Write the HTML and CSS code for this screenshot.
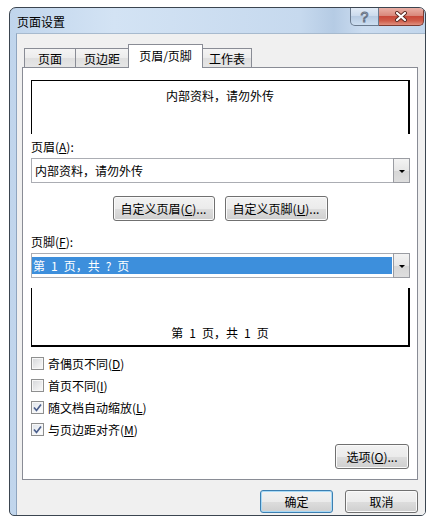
FILE: index.html
```html
<!DOCTYPE html>
<html lang="zh-CN">
  <head>
    <meta charset="UTF-8" />
    <meta name="viewport" content="width=device-width, initial-scale=1.0" />
    <title>页面设置</title>
    <link rel="stylesheet" href="styles.css">
  </head>
  <body>
    <div class="window">
      <div class="titlebar">
        <span class="title">页面设置</span>
        <div class="caption-btns">
          <span class="cap-btn help">?</span>
          <span class="cap-btn close">
            <svg width="14" height="11" viewBox="0 0 14 11">
              <path d="M3 2 L11 9 M11 2 L3 9" stroke="#5a2a24" stroke-width="4" stroke-linecap="round" />
              <path d="M3 2 L11 9 M11 2 L3 9" stroke="#fff" stroke-width="2.2" stroke-linecap="round" />
            </svg>
          </span>
        </div>
      </div>

      <div class="client">
        <div class="tabs">
          <span class="tab">页面</span>
          <span class="tab">页边距</span>
          <span class="tab active">页眉/页脚</span>
          <span class="tab">工作表</span>
        </div>

        <div class="panel">
          <div class="preview preview-head">内部资料，请勿外传</div>

          <div class="field-label">页眉(<u>A</u>):</div>
          <div class="combo">
            <span class="combo-text">内部资料，请勿外传</span>
            <span class="combo-arrow"></span>
          </div>

          <div class="custom-btns">
            <button class="btn btn-custom">自定义页眉(<u>C</u>)...</button>
            <button class="btn btn-custom">自定义页脚(<u>U</u>)...</button>
          </div>

          <div class="field-label field-label-foot">页脚(<u>F</u>):</div>
          <div class="combo">
            <span class="combo-text selected">第&ensp;1&ensp;页，共&ensp;?&ensp;页</span>
            <span class="combo-arrow"></span>
          </div>

          <div class="preview preview-foot">第&ensp;1&ensp;页，共&ensp;1&ensp;页</div>

          <div class="checks">
            <label class="check"><span class="box"></span><span>奇偶页不同(<u>D</u>)</span></label>
            <label class="check"><span class="box"></span><span>首页不同(<u>I</u>)</span></label>
            <label class="check">
              <span class="box checked">
                <svg width="11" height="11" viewBox="0 0 11 11"><path d="M2 5.5 L4.5 8.5 L9 2.5" fill="none" stroke="#4b5f8c" stroke-width="1.7" /></svg>
              </span>
              <span>随文档自动缩放(<u>L</u>)</span>
            </label>
            <label class="check">
              <span class="box checked">
                <svg width="11" height="11" viewBox="0 0 11 11"><path d="M2 5.5 L4.5 8.5 L9 2.5" fill="none" stroke="#4b5f8c" stroke-width="1.7" /></svg>
              </span>
              <span>与页边距对齐(<u>M</u>)</span>
            </label>
          </div>

          <div class="options-row">
            <button class="btn btn-options">选项(<u>O</u>)...</button>
          </div>
        </div>

        <div class="dialog-btns">
          <button class="btn btn-dialog default">确定</button>
          <button class="btn btn-dialog">取消</button>
        </div>
      </div>
    </div>
  </body>
</html>
```

FILE: styles.css
```css
*,
*::before,
*::after {
  box-sizing: border-box;
  padding: 0;
  margin: 0;
}
body {
  background: #fff;
  font-family: "Noto Sans CJK SC", "Liberation Sans", sans-serif;
  font-size: 12px;
  color: #000;
}
.window {
  margin: 7px 0 0 9px;
  width: 417px;
  height: 509px;
  border: 1px solid #3b4550;
  border-radius: 7px 7px 5px 5px;
  background: linear-gradient(to right, #c0d5ec 0%, #d3e3f4 25%, #c6d9ee 70%, #b5cbe4 78%, #cbdcf0 85%, #c2d6ec 100%);
  display: flex;
  flex-direction: column;
  overflow: hidden;
}
.titlebar {
  height: 25px;
  flex-shrink: 0;
  display: flex;
  align-items: flex-start;
  justify-content: space-between;
  padding-left: 7px;
}
.title {
  margin-top: 6px;
  line-height: 16px;
}
.caption-btns {
  display: flex;
  margin-right: 1px;
}
.cap-btn {
  height: 18px;
  display: flex;
  align-items: center;
  justify-content: center;
  border: 1px solid #6a7a8e;
  border-top: none;
}
.help {
  width: 29px;
  border-radius: 0 0 0 5px;
  background: linear-gradient(#e2ebf6, #ccdbed 45%, #b7cbe2 50%, #cddef1);
  font-family: "Liberation Sans", sans-serif;
  font-size: 14px;
  color: #f6f8fb;
  -webkit-text-stroke: 1px #667385;
}
.close {
  width: 45px;
  border-left: none;
  border-color: #7c3a30;
  border-radius: 0 0 5px 0;
  background: linear-gradient(#eab0a6, #d9887b 45%, #c8493a 50%, #cf5c49 75%, #e09080);
}
.client {
  flex: 1;
  margin-left: 6px;
  background: #f0f0f0;
  border-left: 1px solid #8fa5bf;
  border-top: 1px solid #a7bace;
  padding: 0 7px 0 5px;
  display: flex;
  flex-direction: column;
}
.tabs {
  display: grid;
  grid-template-columns: 52px 53px 74px 49px;
  align-items: end;
  margin: 10px 0 -1px 2px;
  position: relative;
  z-index: 1;
}
.tab {
  height: 19px;
  margin-bottom: 1px;
  margin-left: -1px;
  border: 1px solid #898c95;
  border-bottom: none;
  background: linear-gradient(#f4f4f4, #ececec 50%, #dfdfdf 51%, #e6e6e6);
  display: flex;
  align-items: center;
  justify-content: center;
  padding-top: 1px;
}
.tab:first-child {
  margin-left: 0;
}
.tab.active {
  height: 24px;
  margin-bottom: 0;
  background: #fff;
  padding-bottom: 3px;
}
.panel {
  height: 413px;
  background: #fff;
  border: 1px solid #898c95;
  padding: 12px 7px 0 8px;
  display: flex;
  flex-direction: column;
}
.preview {
  border: 0 solid #000;
  text-align: center;
  line-height: 16px;
}
.preview-head {
  height: 54px;
  border-width: 1px 2px 0 1px;
  padding-top: 7px;
}
.preview-foot {
  height: 59px;
  margin-top: 10px;
  border-width: 0 2px 2px 1px;
  padding-top: 37px;
}
.field-label {
  margin-top: 5px;
  line-height: 16px;
}
.field-label-foot {
  margin-top: 13px;
}
.combo {
  margin-top: 3px;
  height: 25px;
  border: 1px solid #abadb3;
  display: flex;
}
.combo-text {
  flex: 1;
  line-height: 23px;
  padding-left: 3px;
}
.combo-text.selected {
  margin: 3px 1px 3px 0;
  line-height: 17px;
  padding-left: 1px;
  background: #3d8fdc;
  color: #fff;
}
.combo-arrow {
  width: 17px;
  margin: -1px -1px -1px 0;
  border: 1px solid #9a9ca2;
  background: linear-gradient(#f3f3f3, #e6e6e6 50%, #d6d6d6 51%, #dedede);
  display: flex;
  align-items: center;
  justify-content: center;
}
.combo-arrow::after {
  content: "";
  border-left: 3px solid transparent;
  border-right: 3px solid transparent;
  border-top: 3px solid #000;
  margin-top: 1px;
}
.btn {
  font-family: "Noto Sans CJK SC", "Liberation Sans", sans-serif;
  font-size: 12px;
  color: #000;
  border: 1px solid #707070;
  border-radius: 3px;
  background: linear-gradient(#f2f2f2, #ebebeb 50%, #dddddd 51%, #cfcfcf);
  box-shadow: inset 0 0 0 1px #fafafa;
  line-height: 16px;
}
.custom-btns {
  display: flex;
  justify-content: center;
  gap: 10px;
  margin-top: 13px;
  padding-right: 1px;
}
.btn-custom {
  width: 102px;
  height: 25px;
}
.btn-custom + .btn-custom {
  width: 103px;
}
.checks {
  margin-top: 5px;
  display: flex;
  flex-direction: column;
}
.check {
  height: 22px;
  display: flex;
  align-items: center;
  gap: 4px;
}
.box {
  width: 13px;
  height: 13px;
  border: 1px solid #8e8f8f;
  background: linear-gradient(135deg, #d4d6d9, #f4f4f4 80%);
  box-shadow: inset 0 0 0 1px #f7f7f7;
  display: flex;
  align-items: center;
  justify-content: center;
}
.box.checked {
  background: linear-gradient(135deg, #dde3ea, #fafbfc 80%);
}
.options-row {
  margin-top: 4px;
  display: flex;
  justify-content: flex-end;
  padding-right: 1px;
}
.btn-options {
  width: 74px;
  height: 25px;
}
.dialog-btns {
  margin-top: 10px;
  display: flex;
  justify-content: flex-end;
  gap: 12px;
}
.btn-dialog {
  width: 73px;
  height: 23px;
}
.btn-dialog.default {
  border-color: #3c7fb1;
  box-shadow: inset 0 0 0 1px #a7d9f6;
}
```
